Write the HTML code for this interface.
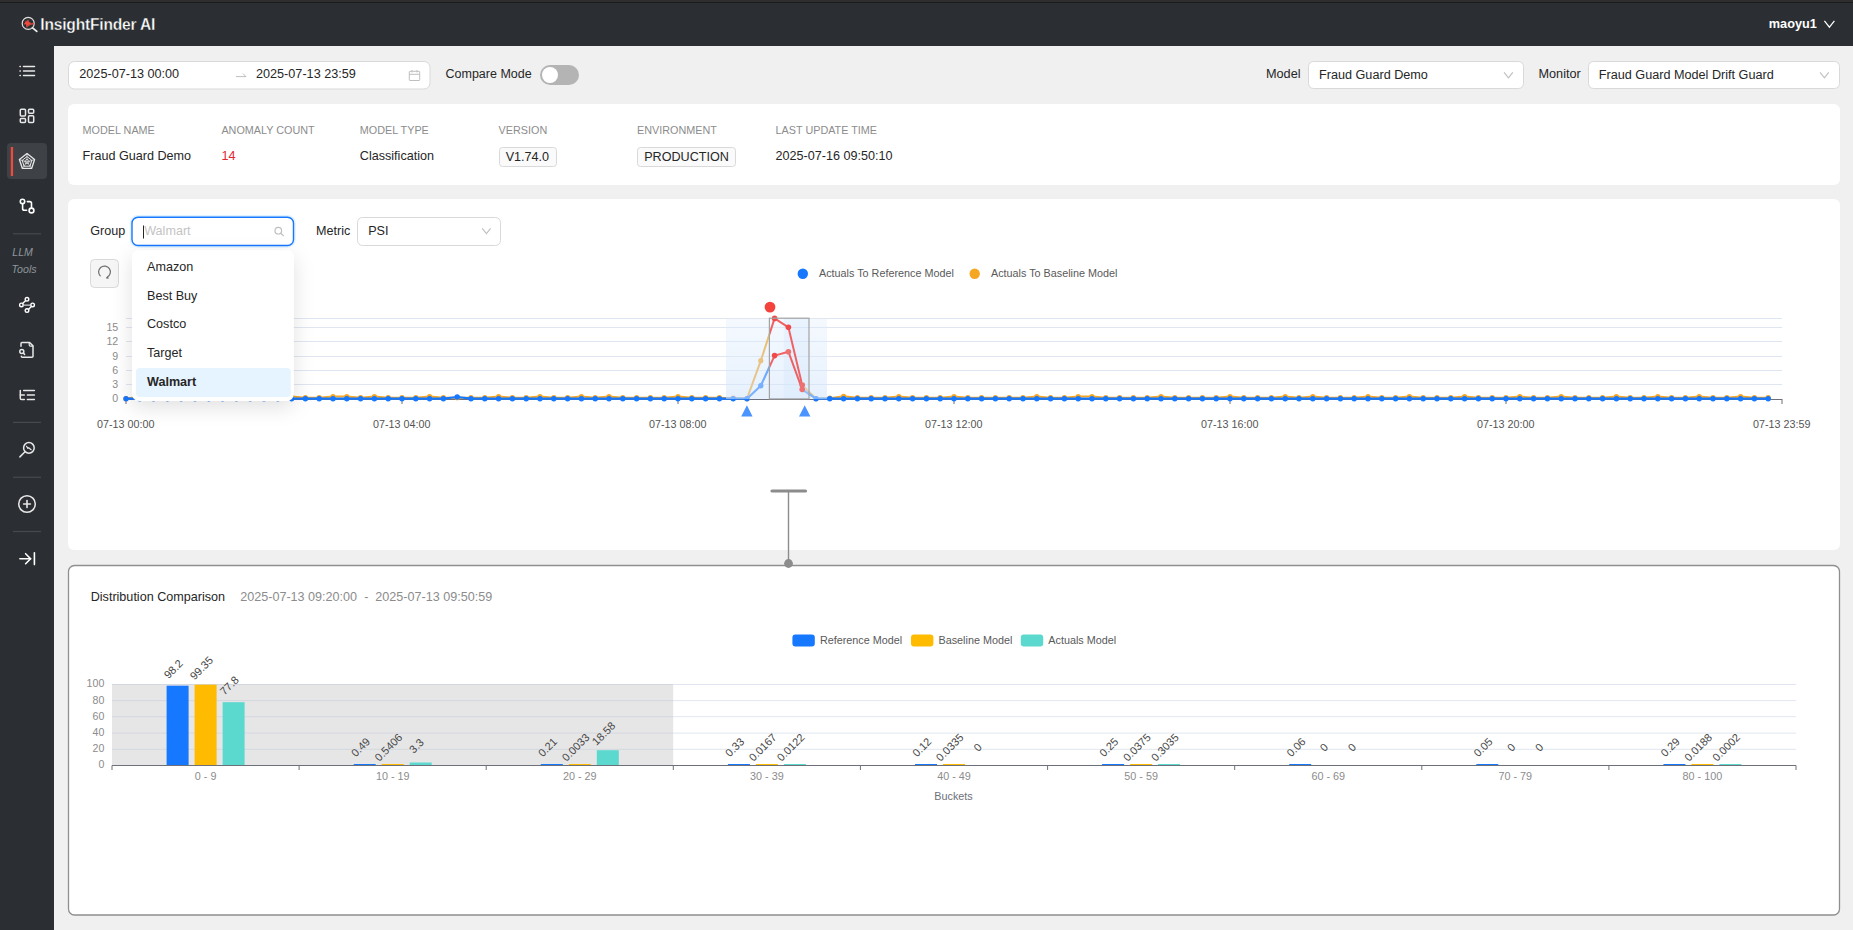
<!DOCTYPE html>
<html><head><meta charset="utf-8"><style>
html,body{margin:0;padding:0;}
body{width:1853px;height:930px;overflow:hidden;background:#f0f0f0;font-family:"Liberation Sans", sans-serif;position:relative;}
svg{position:absolute;left:0;top:0;font-family:"Liberation Sans", sans-serif;}
</style></head><body>
<svg width="1853" height="930" viewBox="0 0 1853 930">
<rect x="0" y="0" width="1853" height="930" fill="#f0f0f0"/>
<!-- header -->
<rect x="0" y="0" width="1853" height="46" fill="#2b2f33"/>
<rect x="0" y="0" width="1853" height="2" fill="#2e2e2e"/>
<rect x="0" y="2" width="1853" height="1" fill="#1b1b1b"/>

<g>
  <circle cx="28.2" cy="23.4" r="6.0" fill="none" stroke="#e0e0e0" stroke-width="1.2"/>
  <line x1="32.6" y1="27.9" x2="36.8" y2="31.4" stroke="#f0f0f0" stroke-width="1.7" stroke-linecap="round"/>
  <path d="M24.1 23.8 H25.3 L26.2 21.2 L27 26.9 L28 20 L28.8 25.6 L29.6 22.6 L30.4 24.2 L34.2 23.6" fill="none" stroke="#ef4b3c" stroke-width="1.2" stroke-linejoin="round"/>
</g>

<text x="40.3" y="29.5" font-size="15.6" font-weight="700" fill="#ffffff" letter-spacing="-0.2" stroke="#2b2f33" stroke-width="0.35">InsightFinder AI</text>
<text x="1768.8" y="28.2" font-size="12.7" font-weight="700" fill="#ffffff">maoyu1</text>
<path d="M1824.4 20.8 L1829.4 27.2 L1834.4 20.8" fill="none" stroke="#ffffff" stroke-width="1.2"/>
<!-- sidebar -->
<rect x="0" y="46" width="54" height="884" fill="#2b2f33"/>

<g fill="none" stroke="#e8e8e8" stroke-width="1.5" stroke-linecap="round" stroke-linejoin="round">
  <!-- list -->
  <line x1="23.5" y1="66.4" x2="34.5" y2="66.4"/><line x1="23.5" y1="70.9" x2="34.5" y2="70.9"/><line x1="23.5" y1="75.5" x2="34.5" y2="75.5"/>
  <line x1="20" y1="66.4" x2="20.3" y2="66.4"/><line x1="20" y1="70.9" x2="20.3" y2="70.9"/><line x1="20" y1="75.5" x2="20.3" y2="75.5"/>
  <!-- grid -->
  <rect x="20.3" y="109.2" width="5.2" height="6.9" rx="1"/>
  <rect x="28.5" y="109.2" width="5.2" height="4" rx="1"/>
  <rect x="20.3" y="118.6" width="5.2" height="4" rx="1"/>
  <rect x="28.5" y="115.7" width="5.2" height="6.9" rx="1"/>
</g>
<rect x="7" y="143" width="40" height="36" rx="4" fill="#3e4246"/>
<rect x="10.8" y="147" width="2.3" height="29" fill="#ef4b3c"/>
<g fill="none" stroke="#e8e8e8" stroke-width="1.3" stroke-linejoin="round">
  <polygon points="27,153.6 34.6,159.5 31.7,168.3 22.3,168.3 19.4,159.5"/>
  <polygon points="27,156.6 31.8,160.3 30,166.2 24,166.2 22.2,160.3" stroke-width="1"/>
  <polygon points="27,159.2 29.3,160.9 28.4,163.6 25.6,163.6 24.7,160.9" stroke-width="0.8"/>
  <line x1="27" y1="153.3" x2="27" y2="162" stroke-width="0.7"/>
  <line x1="34.6" y1="159.5" x2="27" y2="162" stroke-width="0.7"/>
  <line x1="19.4" y1="159.5" x2="27" y2="162" stroke-width="0.7"/>
  <line x1="31.7" y1="168.3" x2="27" y2="162" stroke-width="0.7"/>
  <line x1="22.3" y1="168.3" x2="27" y2="162" stroke-width="0.7"/>
</g>
<g fill="none" stroke="#ffffff" stroke-width="1.6" stroke-linecap="round" stroke-linejoin="round">
  <!-- route -->
  <circle cx="22.5" cy="201.5" r="2.2"/>
  <circle cx="31.5" cy="210.5" r="2.4"/>
  <path d="M22.6 203.6 V208.5 Q22.6 210.3 24.4 210.3 H26.6"/>
  <path d="M27.4 201.6 H29.8 Q31.5 201.6 31.5 203.3 V208.2"/>
</g>
<line x1="13" y1="233.8" x2="41" y2="233.8" stroke="#464a4e" stroke-width="1.2"/>
<text x="12.3" y="256.2" font-size="10.6" font-style="italic" fill="#8f959b">LLM</text>
<text x="11.6" y="272.6" font-size="10.6" font-style="italic" fill="#8f959b">Tools</text>
<g fill="none" stroke="#ffffff" stroke-width="1.4" stroke-linecap="round">
  <!-- share nodes -->
  <circle cx="27" cy="299.3" r="1.8"/>
  <circle cx="21.4" cy="304.9" r="1.8"/>
  <circle cx="32.6" cy="304.9" r="1.8"/>
  <circle cx="27" cy="310.6" r="1.8"/>
  <line x1="25.5" y1="300.8" x2="22.6" y2="303.6"/>
  <line x1="23.2" y1="305.1" x2="30.8" y2="305.1" stroke="#cfd2d4"/>
  <line x1="31.4" y1="306.6" x2="28.4" y2="309.4"/>
</g>
<g fill="none" stroke="#e8e8e8" stroke-width="1.5" stroke-linecap="round" stroke-linejoin="round">
  <!-- doc search -->
  <path d="M21 346.2 V343.6 Q21 342.5 22 342.5 H29.6 L33 345.9 V356.3 Q33 357.3 32 357.3 H22.3 Q21.3 357.3 21.3 356.3"/>
  <path d="M29.2 342.8 V344.9 Q29.2 346.1 30.4 346.1 H32.8" stroke-width="1.2"/>
  <circle cx="21.8" cy="351.4" r="2.0"/>
  <line x1="23.4" y1="353" x2="24.6" y2="354.5"/>
  <!-- tree list -->
  <path d="M20.3 390.5 V398.2 Q20.3 399.5 21.6 399.5 H24.3"/>
  <line x1="20.3" y1="395" x2="24.3" y2="395"/>
  <line x1="23.6" y1="390.5" x2="34.4" y2="390.5"/>
  <line x1="27.4" y1="395" x2="34.4" y2="395"/>
  <line x1="27.4" y1="399.5" x2="34.4" y2="399.5"/>
</g>
<line x1="13" y1="422.4" x2="41" y2="422.4" stroke="#464a4e" stroke-width="1.2"/>
<g fill="none" stroke="#e8e8e8" stroke-width="1.5" stroke-linecap="round" stroke-linejoin="round">
  <circle cx="28.9" cy="447.9" r="5.3"/>
  <line x1="25" y1="451.8" x2="19.9" y2="456.9"/>
  <path d="M26.6 446.3 L27.9 448.3 L28.7 447.7 L31.1 449.7" stroke-width="1.2"/>
</g>
<line x1="13" y1="477.3" x2="41" y2="477.3" stroke="#464a4e" stroke-width="1.2"/>
<g fill="none" stroke="#e8e8e8" stroke-width="1.5" stroke-linecap="round">
  <circle cx="27" cy="504" r="8.3"/>
  <line x1="27" y1="500.6" x2="27" y2="507.4" stroke-width="1.6"/>
  <line x1="23.6" y1="504" x2="30.4" y2="504" stroke-width="1.6"/>
</g>
<line x1="13" y1="531.5" x2="41" y2="531.5" stroke="#464a4e" stroke-width="1.2"/>
<g fill="none" stroke="#ffffff" stroke-width="1.6" stroke-linecap="round" stroke-linejoin="round">
  <line x1="34.4" y1="552.8" x2="34.4" y2="564.6"/>
  <line x1="19.9" y1="558.8" x2="30.6" y2="558.8"/>
  <path d="M25.6 553.7 L30.6 558.7 L25.6 563.7"/>
</g>

<!-- date picker -->
<rect x="68.5" y="61.5" width="361.5" height="27.5" rx="6" fill="#fff" stroke="#d9d9d9"/>
<text x="79.3" y="77.8" font-size="12.65" fill="#262626" font-weight="400" text-anchor="start" >2025-07-13 00:00</text>
<path d="M236 76.6 H246 L243 73.6" fill="none" stroke="#bfbfbf" stroke-width="1"/>
<text x="256" y="77.8" font-size="12.65" fill="#262626" font-weight="400" text-anchor="start" >2025-07-13 23:59</text>
<g fill="none" stroke="#bfbfbf" stroke-width="1"><rect x="409.3" y="71.3" width="10.4" height="9.2" rx="0.6"/><line x1="409.3" y1="74.3" x2="419.7" y2="74.3"/><line x1="412" y1="70" x2="412" y2="72.5"/><line x1="417" y1="70" x2="417" y2="72.5"/></g>
<text x="445.5" y="78.2" font-size="12.5" fill="#262626" font-weight="400" text-anchor="start" >Compare Mode</text>
<rect x="540" y="65" width="39" height="20" rx="10" fill="#b4b4b4"/>
<circle cx="550" cy="75" r="8" fill="#fff"/>
<text x="1266" y="78.2" font-size="12.7" fill="#262626" font-weight="400" text-anchor="start" >Model</text>
<rect x="1308.5" y="61.5" width="215" height="27" rx="5" fill="#fff" stroke="#d9d9d9"/>
<text x="1319" y="79" font-size="12.65" fill="#262626" font-weight="400" text-anchor="start" >Fraud Guard Demo</text>
<path d="M1504.1 72.3 L1508.4499999999998 77.868 L1512.8 72.3" fill="none" stroke="#bfbfbf" stroke-width="1.1"/>
<text x="1538.5" y="78.2" font-size="12.7" fill="#262626" font-weight="400" text-anchor="start" >Monitor</text>
<rect x="1588.5" y="61.5" width="251" height="27" rx="5" fill="#fff" stroke="#d9d9d9"/>
<text x="1598.8" y="79" font-size="12.65" fill="#262626" font-weight="400" text-anchor="start" >Fraud Guard Model Drift Guard</text>
<path d="M1820.1 72.3 L1824.3999999999999 77.804 L1828.6999999999998 72.3" fill="none" stroke="#bfbfbf" stroke-width="1.1"/>
<!-- info card -->
<rect x="68" y="104" width="1772" height="81" rx="6" fill="#fff"/>
<text x="82.6" y="134" font-size="10.8" fill="#8c8c8c" font-weight="400" text-anchor="start" >MODEL NAME</text><text x="221.4" y="134" font-size="10.8" fill="#8c8c8c" font-weight="400" text-anchor="start" >ANOMALY COUNT</text><text x="359.8" y="134" font-size="10.8" fill="#8c8c8c" font-weight="400" text-anchor="start" >MODEL TYPE</text><text x="498.6" y="134" font-size="10.8" fill="#8c8c8c" font-weight="400" text-anchor="start" >VERSION</text><text x="637" y="134" font-size="10.8" fill="#8c8c8c" font-weight="400" text-anchor="start" >ENVIRONMENT</text><text x="775.6" y="134" font-size="10.8" fill="#8c8c8c" font-weight="400" text-anchor="start" >LAST UPDATE TIME</text>
<text x="82.6" y="159.8" font-size="12.6" fill="#262626" font-weight="400" text-anchor="start" >Fraud Guard Demo</text>
<text x="221.4" y="159.8" font-size="12.6" fill="#e3262f" font-weight="400" text-anchor="start" >14</text>
<text x="359.8" y="159.8" font-size="12.6" fill="#262626" font-weight="400" text-anchor="start" >Classification</text>
<rect x="499.5" y="147.5" width="57" height="19" rx="3" fill="#fafafa" stroke="#d9d9d9"/>
<text x="505.7" y="161" font-size="12.6" fill="#262626" font-weight="400" text-anchor="start" >V1.74.0</text>
<rect x="637.5" y="147.5" width="98" height="19" rx="3" fill="#fafafa" stroke="#d9d9d9"/>
<text x="644.2" y="161" font-size="12.6" fill="#262626" font-weight="400" text-anchor="start" >PRODUCTION</text>
<text x="775.6" y="159.8" font-size="12.6" fill="#262626" font-weight="400" text-anchor="start" >2025-07-16 09:50:10</text>
<!-- chart card -->
<rect x="68" y="199" width="1772" height="351" rx="6" fill="#fff"/>
<text x="90.3" y="234.8" font-size="12.6" fill="#262626" font-weight="400" text-anchor="start" >Group</text>
<rect x="132" y="217.2" width="161.5" height="28.3" rx="6" fill="#fff" stroke="#0591ff" stroke-opacity="0.12" stroke-width="4.5"/>
<rect x="132" y="217.2" width="161.5" height="28.3" rx="6" fill="#fff" stroke="#1677ff" stroke-width="1.4"/>
<line x1="143.5" y1="225.5" x2="143.5" y2="238.5" stroke="#262626" stroke-width="1"/>
<text x="144.2" y="235.0" font-size="12.6" fill="#c4c4c4" font-weight="400" text-anchor="start" >Walmart</text>
<g fill="none" stroke="#bfbfbf" stroke-width="1.2"><circle cx="278.3" cy="230.7" r="3.3"/><line x1="280.7" y1="233.1" x2="283.6" y2="236"/></g>
<text x="316" y="234.8" font-size="12.6" fill="#262626" font-weight="400" text-anchor="start" >Metric</text>
<rect x="357.5" y="217.5" width="143" height="28" rx="5" fill="#fff" stroke="#d9d9d9"/>
<text x="368.2" y="235" font-size="12.6" fill="#262626" font-weight="400" text-anchor="start" >PSI</text>
<path d="M482.2 228.3 L486.4 233.67600000000002 L490.59999999999997 228.3" fill="none" stroke="#bfbfbf" stroke-width="1.1"/>
<rect x="90.5" y="259.5" width="28" height="28" rx="4" fill="#f5f5f5" stroke="#d9d9d9"/>
<path d="M100.5 276.3 A5.9 5.9 0 1 1 107.2 277.2" fill="none" stroke="#6e6e6e" stroke-width="1.2"/>
<path d="M106 278 L107.6 276.6 L108.4 278.4 Z" fill="#6e6e6e" stroke="#6e6e6e" stroke-width="0.6"/>

<defs>
  <clipPath id="cRed"><rect x="769.4" y="280" width="32.80000000000007" height="130"/></clipPath>
  <clipPath id="cNotRed"><path d="M0 280 H769.4 V410 H0 Z M802.2 280 H1853 V410 H802.2 Z"/></clipPath>
  <linearGradient id="band" x1="0" y1="0" x2="0" y2="1"><stop offset="0" stop-color="#dcebfd" stop-opacity="0.3"/><stop offset="1" stop-color="#d2e5fb" stop-opacity="0.55"/></linearGradient>
</defs>
<line x1="126" y1="318.5" x2="1782" y2="318.5" stroke="#e0e6f1" stroke-width="1"/><line x1="126" y1="327.5" x2="1782" y2="327.5" stroke="#e0e6f1" stroke-width="1"/><line x1="126" y1="341.5" x2="1782" y2="341.5" stroke="#e0e6f1" stroke-width="1"/><line x1="126" y1="356.5" x2="1782" y2="356.5" stroke="#e0e6f1" stroke-width="1"/><line x1="126" y1="370.5" x2="1782" y2="370.5" stroke="#e0e6f1" stroke-width="1"/><line x1="126" y1="384.5" x2="1782" y2="384.5" stroke="#e0e6f1" stroke-width="1"/>
<line x1="126" y1="399.5" x2="1782" y2="399.5" stroke="#6e7079" stroke-width="1"/>
<line x1="126" y1="399" x2="126" y2="404" stroke="#6e7079" stroke-width="1"/><line x1="402" y1="399" x2="402" y2="404" stroke="#6e7079" stroke-width="1"/><line x1="678" y1="399" x2="678" y2="404" stroke="#6e7079" stroke-width="1"/><line x1="954" y1="399" x2="954" y2="404" stroke="#6e7079" stroke-width="1"/><line x1="1230" y1="399" x2="1230" y2="404" stroke="#6e7079" stroke-width="1"/><line x1="1506" y1="399" x2="1506" y2="404" stroke="#6e7079" stroke-width="1"/><line x1="1782" y1="399" x2="1782" y2="404" stroke="#6e7079" stroke-width="1"/>
<text x="118.2" y="330.5" font-size="10.6" fill="#8c8c8c" font-weight="400" text-anchor="end" >15</text><text x="118.2" y="344.8" font-size="10.6" fill="#8c8c8c" font-weight="400" text-anchor="end" >12</text><text x="118.2" y="359.6" font-size="10.6" fill="#8c8c8c" font-weight="400" text-anchor="end" >9</text><text x="118.2" y="373.90000000000003" font-size="10.6" fill="#8c8c8c" font-weight="400" text-anchor="end" >6</text><text x="118.2" y="388.1" font-size="10.6" fill="#8c8c8c" font-weight="400" text-anchor="end" >3</text><text x="118.2" y="402.3" font-size="10.6" fill="#8c8c8c" font-weight="400" text-anchor="end" >0</text>
<text x="125.7" y="428.0" font-size="10.75" fill="#555555" font-weight="400" text-anchor="middle" >07-13 00:00</text><text x="401.7" y="428.0" font-size="10.75" fill="#555555" font-weight="400" text-anchor="middle" >07-13 04:00</text><text x="677.7" y="428.0" font-size="10.75" fill="#555555" font-weight="400" text-anchor="middle" >07-13 08:00</text><text x="953.7" y="428.0" font-size="10.75" fill="#555555" font-weight="400" text-anchor="middle" >07-13 12:00</text><text x="1229.7" y="428.0" font-size="10.75" fill="#555555" font-weight="400" text-anchor="middle" >07-13 16:00</text><text x="1505.7" y="428.0" font-size="10.75" fill="#555555" font-weight="400" text-anchor="middle" >07-13 20:00</text><text x="1781.7" y="428.0" font-size="10.75" fill="#555555" font-weight="400" text-anchor="middle" >07-13 23:59</text>
<g clip-path="url(#cNotRed)">
  <polyline points="126.0,398.7 139.8,396.6 153.6,397.7 167.4,396.6 181.2,397.7 195.0,396.6 208.8,397.7 222.6,397.7 236.4,396.6 250.2,397.7 264.0,397.7 277.8,397.7 291.6,396.6 305.4,397.7 319.2,397.7 333.0,396.6 346.8,396.6 360.6,397.7 374.4,396.6 388.2,397.7 402.0,397.7 415.8,397.7 429.6,396.6 443.4,397.7 457.2,397.7 471.0,397.7 484.8,397.7 498.6,396.6 512.4,397.7 526.2,397.7 540.0,396.6 553.8,397.7 567.6,397.7 581.4,396.6 595.2,397.7 609.0,396.6 622.8,397.7 636.6,397.7 650.4,397.7 664.2,397.7 678.0,396.6 691.8,397.7 705.6,397.7 719.4,397.7 733.2,398.2 747.0,398.7 760.8,360.7 774.6,318.4 788.4,327.3 802.2,385.1 816.0,398.7 829.8,398.2 843.6,396.3 857.4,397.7 871.2,397.7 885.0,397.7 898.8,396.6 912.6,397.7 926.4,397.7 940.2,397.7 954.0,396.6 967.8,397.7 981.6,397.7 995.4,397.7 1009.2,397.7 1023.0,397.7 1036.8,396.6 1050.6,397.7 1064.4,397.7 1078.2,396.6 1092.0,396.6 1105.8,397.7 1119.6,397.7 1133.4,397.7 1147.2,397.7 1161.0,396.6 1174.8,397.7 1188.6,397.7 1202.4,397.7 1216.2,397.7 1230.0,396.6 1243.8,397.7 1257.6,397.7 1271.4,397.7 1285.2,396.6 1299.0,397.7 1312.8,396.6 1326.6,397.7 1340.4,397.7 1354.2,397.7 1368.0,396.6 1381.8,397.7 1395.6,397.7 1409.4,396.6 1423.2,397.7 1437.0,397.7 1450.8,397.7 1464.6,396.6 1478.4,397.7 1492.2,397.7 1506.0,397.7 1519.8,396.6 1533.6,397.7 1547.4,397.7 1561.2,396.6 1575.0,397.7 1588.8,397.7 1602.6,397.7 1616.4,396.6 1630.2,397.7 1644.0,397.7 1657.8,396.6 1671.6,397.7 1685.4,397.7 1699.2,396.6 1713.0,397.7 1726.8,397.7 1740.6,396.6 1754.4,397.7 1768.2,397.7" fill="none" stroke="#f5a623" stroke-width="2" stroke-linejoin="round"/>
  <circle cx="126.0" cy="398.7" r="2.6" fill="#f5a623"/><circle cx="139.8" cy="396.6" r="2.6" fill="#f5a623"/><circle cx="153.6" cy="397.7" r="2.6" fill="#f5a623"/><circle cx="167.4" cy="396.6" r="2.6" fill="#f5a623"/><circle cx="181.2" cy="397.7" r="2.6" fill="#f5a623"/><circle cx="195.0" cy="396.6" r="2.6" fill="#f5a623"/><circle cx="208.8" cy="397.7" r="2.6" fill="#f5a623"/><circle cx="222.6" cy="397.7" r="2.6" fill="#f5a623"/><circle cx="236.4" cy="396.6" r="2.6" fill="#f5a623"/><circle cx="250.2" cy="397.7" r="2.6" fill="#f5a623"/><circle cx="264.0" cy="397.7" r="2.6" fill="#f5a623"/><circle cx="277.8" cy="397.7" r="2.6" fill="#f5a623"/><circle cx="291.6" cy="396.6" r="2.6" fill="#f5a623"/><circle cx="305.4" cy="397.7" r="2.6" fill="#f5a623"/><circle cx="319.2" cy="397.7" r="2.6" fill="#f5a623"/><circle cx="333.0" cy="396.6" r="2.6" fill="#f5a623"/><circle cx="346.8" cy="396.6" r="2.6" fill="#f5a623"/><circle cx="360.6" cy="397.7" r="2.6" fill="#f5a623"/><circle cx="374.4" cy="396.6" r="2.6" fill="#f5a623"/><circle cx="388.2" cy="397.7" r="2.6" fill="#f5a623"/><circle cx="402.0" cy="397.7" r="2.6" fill="#f5a623"/><circle cx="415.8" cy="397.7" r="2.6" fill="#f5a623"/><circle cx="429.6" cy="396.6" r="2.6" fill="#f5a623"/><circle cx="443.4" cy="397.7" r="2.6" fill="#f5a623"/><circle cx="457.2" cy="397.7" r="2.6" fill="#f5a623"/><circle cx="471.0" cy="397.7" r="2.6" fill="#f5a623"/><circle cx="484.8" cy="397.7" r="2.6" fill="#f5a623"/><circle cx="498.6" cy="396.6" r="2.6" fill="#f5a623"/><circle cx="512.4" cy="397.7" r="2.6" fill="#f5a623"/><circle cx="526.2" cy="397.7" r="2.6" fill="#f5a623"/><circle cx="540.0" cy="396.6" r="2.6" fill="#f5a623"/><circle cx="553.8" cy="397.7" r="2.6" fill="#f5a623"/><circle cx="567.6" cy="397.7" r="2.6" fill="#f5a623"/><circle cx="581.4" cy="396.6" r="2.6" fill="#f5a623"/><circle cx="595.2" cy="397.7" r="2.6" fill="#f5a623"/><circle cx="609.0" cy="396.6" r="2.6" fill="#f5a623"/><circle cx="622.8" cy="397.7" r="2.6" fill="#f5a623"/><circle cx="636.6" cy="397.7" r="2.6" fill="#f5a623"/><circle cx="650.4" cy="397.7" r="2.6" fill="#f5a623"/><circle cx="664.2" cy="397.7" r="2.6" fill="#f5a623"/><circle cx="678.0" cy="396.6" r="2.6" fill="#f5a623"/><circle cx="691.8" cy="397.7" r="2.6" fill="#f5a623"/><circle cx="705.6" cy="397.7" r="2.6" fill="#f5a623"/><circle cx="719.4" cy="397.7" r="2.6" fill="#f5a623"/><circle cx="733.2" cy="398.2" r="2.6" fill="#f5a623"/><circle cx="747.0" cy="398.7" r="2.6" fill="#f5a623"/><circle cx="760.8" cy="360.7" r="2.6" fill="#f5a623"/><circle cx="774.6" cy="318.4" r="2.6" fill="#f5a623"/><circle cx="788.4" cy="327.3" r="2.6" fill="#f5a623"/><circle cx="802.2" cy="385.1" r="2.6" fill="#f5a623"/><circle cx="816.0" cy="398.7" r="2.6" fill="#f5a623"/><circle cx="829.8" cy="398.2" r="2.6" fill="#f5a623"/><circle cx="843.6" cy="396.3" r="2.6" fill="#f5a623"/><circle cx="857.4" cy="397.7" r="2.6" fill="#f5a623"/><circle cx="871.2" cy="397.7" r="2.6" fill="#f5a623"/><circle cx="885.0" cy="397.7" r="2.6" fill="#f5a623"/><circle cx="898.8" cy="396.6" r="2.6" fill="#f5a623"/><circle cx="912.6" cy="397.7" r="2.6" fill="#f5a623"/><circle cx="926.4" cy="397.7" r="2.6" fill="#f5a623"/><circle cx="940.2" cy="397.7" r="2.6" fill="#f5a623"/><circle cx="954.0" cy="396.6" r="2.6" fill="#f5a623"/><circle cx="967.8" cy="397.7" r="2.6" fill="#f5a623"/><circle cx="981.6" cy="397.7" r="2.6" fill="#f5a623"/><circle cx="995.4" cy="397.7" r="2.6" fill="#f5a623"/><circle cx="1009.2" cy="397.7" r="2.6" fill="#f5a623"/><circle cx="1023.0" cy="397.7" r="2.6" fill="#f5a623"/><circle cx="1036.8" cy="396.6" r="2.6" fill="#f5a623"/><circle cx="1050.6" cy="397.7" r="2.6" fill="#f5a623"/><circle cx="1064.4" cy="397.7" r="2.6" fill="#f5a623"/><circle cx="1078.2" cy="396.6" r="2.6" fill="#f5a623"/><circle cx="1092.0" cy="396.6" r="2.6" fill="#f5a623"/><circle cx="1105.8" cy="397.7" r="2.6" fill="#f5a623"/><circle cx="1119.6" cy="397.7" r="2.6" fill="#f5a623"/><circle cx="1133.4" cy="397.7" r="2.6" fill="#f5a623"/><circle cx="1147.2" cy="397.7" r="2.6" fill="#f5a623"/><circle cx="1161.0" cy="396.6" r="2.6" fill="#f5a623"/><circle cx="1174.8" cy="397.7" r="2.6" fill="#f5a623"/><circle cx="1188.6" cy="397.7" r="2.6" fill="#f5a623"/><circle cx="1202.4" cy="397.7" r="2.6" fill="#f5a623"/><circle cx="1216.2" cy="397.7" r="2.6" fill="#f5a623"/><circle cx="1230.0" cy="396.6" r="2.6" fill="#f5a623"/><circle cx="1243.8" cy="397.7" r="2.6" fill="#f5a623"/><circle cx="1257.6" cy="397.7" r="2.6" fill="#f5a623"/><circle cx="1271.4" cy="397.7" r="2.6" fill="#f5a623"/><circle cx="1285.2" cy="396.6" r="2.6" fill="#f5a623"/><circle cx="1299.0" cy="397.7" r="2.6" fill="#f5a623"/><circle cx="1312.8" cy="396.6" r="2.6" fill="#f5a623"/><circle cx="1326.6" cy="397.7" r="2.6" fill="#f5a623"/><circle cx="1340.4" cy="397.7" r="2.6" fill="#f5a623"/><circle cx="1354.2" cy="397.7" r="2.6" fill="#f5a623"/><circle cx="1368.0" cy="396.6" r="2.6" fill="#f5a623"/><circle cx="1381.8" cy="397.7" r="2.6" fill="#f5a623"/><circle cx="1395.6" cy="397.7" r="2.6" fill="#f5a623"/><circle cx="1409.4" cy="396.6" r="2.6" fill="#f5a623"/><circle cx="1423.2" cy="397.7" r="2.6" fill="#f5a623"/><circle cx="1437.0" cy="397.7" r="2.6" fill="#f5a623"/><circle cx="1450.8" cy="397.7" r="2.6" fill="#f5a623"/><circle cx="1464.6" cy="396.6" r="2.6" fill="#f5a623"/><circle cx="1478.4" cy="397.7" r="2.6" fill="#f5a623"/><circle cx="1492.2" cy="397.7" r="2.6" fill="#f5a623"/><circle cx="1506.0" cy="397.7" r="2.6" fill="#f5a623"/><circle cx="1519.8" cy="396.6" r="2.6" fill="#f5a623"/><circle cx="1533.6" cy="397.7" r="2.6" fill="#f5a623"/><circle cx="1547.4" cy="397.7" r="2.6" fill="#f5a623"/><circle cx="1561.2" cy="396.6" r="2.6" fill="#f5a623"/><circle cx="1575.0" cy="397.7" r="2.6" fill="#f5a623"/><circle cx="1588.8" cy="397.7" r="2.6" fill="#f5a623"/><circle cx="1602.6" cy="397.7" r="2.6" fill="#f5a623"/><circle cx="1616.4" cy="396.6" r="2.6" fill="#f5a623"/><circle cx="1630.2" cy="397.7" r="2.6" fill="#f5a623"/><circle cx="1644.0" cy="397.7" r="2.6" fill="#f5a623"/><circle cx="1657.8" cy="396.6" r="2.6" fill="#f5a623"/><circle cx="1671.6" cy="397.7" r="2.6" fill="#f5a623"/><circle cx="1685.4" cy="397.7" r="2.6" fill="#f5a623"/><circle cx="1699.2" cy="396.6" r="2.6" fill="#f5a623"/><circle cx="1713.0" cy="397.7" r="2.6" fill="#f5a623"/><circle cx="1726.8" cy="397.7" r="2.6" fill="#f5a623"/><circle cx="1740.6" cy="396.6" r="2.6" fill="#f5a623"/><circle cx="1754.4" cy="397.7" r="2.6" fill="#f5a623"/><circle cx="1768.2" cy="397.7" r="2.6" fill="#f5a623"/>
  <polyline points="126.0,398.7 139.8,398.7 153.6,398.7 167.4,398.7 181.2,398.7 195.0,398.7 208.8,398.7 222.6,398.7 236.4,398.7 250.2,398.7 264.0,398.7 277.8,398.7 291.6,398.7 305.4,398.7 319.2,398.7 333.0,398.7 346.8,398.7 360.6,398.7 374.4,398.7 388.2,398.7 402.0,398.7 415.8,398.7 429.6,398.7 443.4,398.7 457.2,397.0 471.0,398.7 484.8,398.7 498.6,398.7 512.4,398.7 526.2,398.7 540.0,398.7 553.8,398.7 567.6,398.7 581.4,398.7 595.2,398.7 609.0,398.7 622.8,398.7 636.6,398.7 650.4,398.7 664.2,398.7 678.0,398.7 691.8,398.7 705.6,398.7 719.4,398.7 733.2,398.7 747.0,398.7 760.8,385.8 774.6,355.6 788.4,351.7 802.2,389.5 816.0,398.7 829.8,398.7 843.6,398.7 857.4,398.7 871.2,398.7 885.0,398.7 898.8,398.7 912.6,398.7 926.4,398.7 940.2,398.7 954.0,398.7 967.8,398.7 981.6,398.7 995.4,398.7 1009.2,398.7 1023.0,398.7 1036.8,398.7 1050.6,398.7 1064.4,398.7 1078.2,398.7 1092.0,398.7 1105.8,398.7 1119.6,398.7 1133.4,398.7 1147.2,398.7 1161.0,398.7 1174.8,398.7 1188.6,398.7 1202.4,398.7 1216.2,398.7 1230.0,398.7 1243.8,398.7 1257.6,398.7 1271.4,398.7 1285.2,398.7 1299.0,398.7 1312.8,398.7 1326.6,398.7 1340.4,398.7 1354.2,398.7 1368.0,398.7 1381.8,398.7 1395.6,398.7 1409.4,398.7 1423.2,398.7 1437.0,398.7 1450.8,398.7 1464.6,398.7 1478.4,398.7 1492.2,398.7 1506.0,398.7 1519.8,398.7 1533.6,398.7 1547.4,398.7 1561.2,398.7 1575.0,398.7 1588.8,398.7 1602.6,398.7 1616.4,398.7 1630.2,398.7 1644.0,398.7 1657.8,398.7 1671.6,398.7 1685.4,398.7 1699.2,398.7 1713.0,398.7 1726.8,398.7 1740.6,398.7 1754.4,398.7 1768.2,398.7" fill="none" stroke="#1677ff" stroke-width="2.2" stroke-linejoin="round"/>
  <circle cx="126.0" cy="398.7" r="2.7" fill="#1677ff"/><circle cx="139.8" cy="398.7" r="2.7" fill="#1677ff"/><circle cx="153.6" cy="398.7" r="2.7" fill="#1677ff"/><circle cx="167.4" cy="398.7" r="2.7" fill="#1677ff"/><circle cx="181.2" cy="398.7" r="2.7" fill="#1677ff"/><circle cx="195.0" cy="398.7" r="2.7" fill="#1677ff"/><circle cx="208.8" cy="398.7" r="2.7" fill="#1677ff"/><circle cx="222.6" cy="398.7" r="2.7" fill="#1677ff"/><circle cx="236.4" cy="398.7" r="2.7" fill="#1677ff"/><circle cx="250.2" cy="398.7" r="2.7" fill="#1677ff"/><circle cx="264.0" cy="398.7" r="2.7" fill="#1677ff"/><circle cx="277.8" cy="398.7" r="2.7" fill="#1677ff"/><circle cx="291.6" cy="398.7" r="2.7" fill="#1677ff"/><circle cx="305.4" cy="398.7" r="2.7" fill="#1677ff"/><circle cx="319.2" cy="398.7" r="2.7" fill="#1677ff"/><circle cx="333.0" cy="398.7" r="2.7" fill="#1677ff"/><circle cx="346.8" cy="398.7" r="2.7" fill="#1677ff"/><circle cx="360.6" cy="398.7" r="2.7" fill="#1677ff"/><circle cx="374.4" cy="398.7" r="2.7" fill="#1677ff"/><circle cx="388.2" cy="398.7" r="2.7" fill="#1677ff"/><circle cx="402.0" cy="398.7" r="2.7" fill="#1677ff"/><circle cx="415.8" cy="398.7" r="2.7" fill="#1677ff"/><circle cx="429.6" cy="398.7" r="2.7" fill="#1677ff"/><circle cx="443.4" cy="398.7" r="2.7" fill="#1677ff"/><circle cx="457.2" cy="397.0" r="2.7" fill="#1677ff"/><circle cx="471.0" cy="398.7" r="2.7" fill="#1677ff"/><circle cx="484.8" cy="398.7" r="2.7" fill="#1677ff"/><circle cx="498.6" cy="398.7" r="2.7" fill="#1677ff"/><circle cx="512.4" cy="398.7" r="2.7" fill="#1677ff"/><circle cx="526.2" cy="398.7" r="2.7" fill="#1677ff"/><circle cx="540.0" cy="398.7" r="2.7" fill="#1677ff"/><circle cx="553.8" cy="398.7" r="2.7" fill="#1677ff"/><circle cx="567.6" cy="398.7" r="2.7" fill="#1677ff"/><circle cx="581.4" cy="398.7" r="2.7" fill="#1677ff"/><circle cx="595.2" cy="398.7" r="2.7" fill="#1677ff"/><circle cx="609.0" cy="398.7" r="2.7" fill="#1677ff"/><circle cx="622.8" cy="398.7" r="2.7" fill="#1677ff"/><circle cx="636.6" cy="398.7" r="2.7" fill="#1677ff"/><circle cx="650.4" cy="398.7" r="2.7" fill="#1677ff"/><circle cx="664.2" cy="398.7" r="2.7" fill="#1677ff"/><circle cx="678.0" cy="398.7" r="2.7" fill="#1677ff"/><circle cx="691.8" cy="398.7" r="2.7" fill="#1677ff"/><circle cx="705.6" cy="398.7" r="2.7" fill="#1677ff"/><circle cx="719.4" cy="398.7" r="2.7" fill="#1677ff"/><circle cx="733.2" cy="398.7" r="2.7" fill="#1677ff"/><circle cx="747.0" cy="398.7" r="2.7" fill="#1677ff"/><circle cx="760.8" cy="385.8" r="2.7" fill="#1677ff"/><circle cx="774.6" cy="355.6" r="2.7" fill="#1677ff"/><circle cx="788.4" cy="351.7" r="2.7" fill="#1677ff"/><circle cx="802.2" cy="389.5" r="2.7" fill="#1677ff"/><circle cx="816.0" cy="398.7" r="2.7" fill="#1677ff"/><circle cx="829.8" cy="398.7" r="2.7" fill="#1677ff"/><circle cx="843.6" cy="398.7" r="2.7" fill="#1677ff"/><circle cx="857.4" cy="398.7" r="2.7" fill="#1677ff"/><circle cx="871.2" cy="398.7" r="2.7" fill="#1677ff"/><circle cx="885.0" cy="398.7" r="2.7" fill="#1677ff"/><circle cx="898.8" cy="398.7" r="2.7" fill="#1677ff"/><circle cx="912.6" cy="398.7" r="2.7" fill="#1677ff"/><circle cx="926.4" cy="398.7" r="2.7" fill="#1677ff"/><circle cx="940.2" cy="398.7" r="2.7" fill="#1677ff"/><circle cx="954.0" cy="398.7" r="2.7" fill="#1677ff"/><circle cx="967.8" cy="398.7" r="2.7" fill="#1677ff"/><circle cx="981.6" cy="398.7" r="2.7" fill="#1677ff"/><circle cx="995.4" cy="398.7" r="2.7" fill="#1677ff"/><circle cx="1009.2" cy="398.7" r="2.7" fill="#1677ff"/><circle cx="1023.0" cy="398.7" r="2.7" fill="#1677ff"/><circle cx="1036.8" cy="398.7" r="2.7" fill="#1677ff"/><circle cx="1050.6" cy="398.7" r="2.7" fill="#1677ff"/><circle cx="1064.4" cy="398.7" r="2.7" fill="#1677ff"/><circle cx="1078.2" cy="398.7" r="2.7" fill="#1677ff"/><circle cx="1092.0" cy="398.7" r="2.7" fill="#1677ff"/><circle cx="1105.8" cy="398.7" r="2.7" fill="#1677ff"/><circle cx="1119.6" cy="398.7" r="2.7" fill="#1677ff"/><circle cx="1133.4" cy="398.7" r="2.7" fill="#1677ff"/><circle cx="1147.2" cy="398.7" r="2.7" fill="#1677ff"/><circle cx="1161.0" cy="398.7" r="2.7" fill="#1677ff"/><circle cx="1174.8" cy="398.7" r="2.7" fill="#1677ff"/><circle cx="1188.6" cy="398.7" r="2.7" fill="#1677ff"/><circle cx="1202.4" cy="398.7" r="2.7" fill="#1677ff"/><circle cx="1216.2" cy="398.7" r="2.7" fill="#1677ff"/><circle cx="1230.0" cy="398.7" r="2.7" fill="#1677ff"/><circle cx="1243.8" cy="398.7" r="2.7" fill="#1677ff"/><circle cx="1257.6" cy="398.7" r="2.7" fill="#1677ff"/><circle cx="1271.4" cy="398.7" r="2.7" fill="#1677ff"/><circle cx="1285.2" cy="398.7" r="2.7" fill="#1677ff"/><circle cx="1299.0" cy="398.7" r="2.7" fill="#1677ff"/><circle cx="1312.8" cy="398.7" r="2.7" fill="#1677ff"/><circle cx="1326.6" cy="398.7" r="2.7" fill="#1677ff"/><circle cx="1340.4" cy="398.7" r="2.7" fill="#1677ff"/><circle cx="1354.2" cy="398.7" r="2.7" fill="#1677ff"/><circle cx="1368.0" cy="398.7" r="2.7" fill="#1677ff"/><circle cx="1381.8" cy="398.7" r="2.7" fill="#1677ff"/><circle cx="1395.6" cy="398.7" r="2.7" fill="#1677ff"/><circle cx="1409.4" cy="398.7" r="2.7" fill="#1677ff"/><circle cx="1423.2" cy="398.7" r="2.7" fill="#1677ff"/><circle cx="1437.0" cy="398.7" r="2.7" fill="#1677ff"/><circle cx="1450.8" cy="398.7" r="2.7" fill="#1677ff"/><circle cx="1464.6" cy="398.7" r="2.7" fill="#1677ff"/><circle cx="1478.4" cy="398.7" r="2.7" fill="#1677ff"/><circle cx="1492.2" cy="398.7" r="2.7" fill="#1677ff"/><circle cx="1506.0" cy="398.7" r="2.7" fill="#1677ff"/><circle cx="1519.8" cy="398.7" r="2.7" fill="#1677ff"/><circle cx="1533.6" cy="398.7" r="2.7" fill="#1677ff"/><circle cx="1547.4" cy="398.7" r="2.7" fill="#1677ff"/><circle cx="1561.2" cy="398.7" r="2.7" fill="#1677ff"/><circle cx="1575.0" cy="398.7" r="2.7" fill="#1677ff"/><circle cx="1588.8" cy="398.7" r="2.7" fill="#1677ff"/><circle cx="1602.6" cy="398.7" r="2.7" fill="#1677ff"/><circle cx="1616.4" cy="398.7" r="2.7" fill="#1677ff"/><circle cx="1630.2" cy="398.7" r="2.7" fill="#1677ff"/><circle cx="1644.0" cy="398.7" r="2.7" fill="#1677ff"/><circle cx="1657.8" cy="398.7" r="2.7" fill="#1677ff"/><circle cx="1671.6" cy="398.7" r="2.7" fill="#1677ff"/><circle cx="1685.4" cy="398.7" r="2.7" fill="#1677ff"/><circle cx="1699.2" cy="398.7" r="2.7" fill="#1677ff"/><circle cx="1713.0" cy="398.7" r="2.7" fill="#1677ff"/><circle cx="1726.8" cy="398.7" r="2.7" fill="#1677ff"/><circle cx="1740.6" cy="398.7" r="2.7" fill="#1677ff"/><circle cx="1754.4" cy="398.7" r="2.7" fill="#1677ff"/><circle cx="1768.2" cy="398.7" r="2.7" fill="#1677ff"/>
</g>

<rect x="726" y="318.5" width="101" height="80.5" fill="url(#band)"/>
<rect x="783.8" y="318.5" width="25.2" height="80.5" fill="#cfe3fb" fill-opacity="0.3"/>
<g clip-path="url(#cRed)">
  <polyline points="126.0,398.7 139.8,396.6 153.6,397.7 167.4,396.6 181.2,397.7 195.0,396.6 208.8,397.7 222.6,397.7 236.4,396.6 250.2,397.7 264.0,397.7 277.8,397.7 291.6,396.6 305.4,397.7 319.2,397.7 333.0,396.6 346.8,396.6 360.6,397.7 374.4,396.6 388.2,397.7 402.0,397.7 415.8,397.7 429.6,396.6 443.4,397.7 457.2,397.7 471.0,397.7 484.8,397.7 498.6,396.6 512.4,397.7 526.2,397.7 540.0,396.6 553.8,397.7 567.6,397.7 581.4,396.6 595.2,397.7 609.0,396.6 622.8,397.7 636.6,397.7 650.4,397.7 664.2,397.7 678.0,396.6 691.8,397.7 705.6,397.7 719.4,397.7 733.2,398.2 747.0,398.7 760.8,360.7 774.6,318.4 788.4,327.3 802.2,385.1 816.0,398.7 829.8,398.2 843.6,396.3 857.4,397.7 871.2,397.7 885.0,397.7 898.8,396.6 912.6,397.7 926.4,397.7 940.2,397.7 954.0,396.6 967.8,397.7 981.6,397.7 995.4,397.7 1009.2,397.7 1023.0,397.7 1036.8,396.6 1050.6,397.7 1064.4,397.7 1078.2,396.6 1092.0,396.6 1105.8,397.7 1119.6,397.7 1133.4,397.7 1147.2,397.7 1161.0,396.6 1174.8,397.7 1188.6,397.7 1202.4,397.7 1216.2,397.7 1230.0,396.6 1243.8,397.7 1257.6,397.7 1271.4,397.7 1285.2,396.6 1299.0,397.7 1312.8,396.6 1326.6,397.7 1340.4,397.7 1354.2,397.7 1368.0,396.6 1381.8,397.7 1395.6,397.7 1409.4,396.6 1423.2,397.7 1437.0,397.7 1450.8,397.7 1464.6,396.6 1478.4,397.7 1492.2,397.7 1506.0,397.7 1519.8,396.6 1533.6,397.7 1547.4,397.7 1561.2,396.6 1575.0,397.7 1588.8,397.7 1602.6,397.7 1616.4,396.6 1630.2,397.7 1644.0,397.7 1657.8,396.6 1671.6,397.7 1685.4,397.7 1699.2,396.6 1713.0,397.7 1726.8,397.7 1740.6,396.6 1754.4,397.7 1768.2,397.7" fill="none" stroke="#f04848" stroke-opacity="0.85" stroke-width="2" stroke-linejoin="round"/>
  <polyline points="126.0,398.7 139.8,398.7 153.6,398.7 167.4,398.7 181.2,398.7 195.0,398.7 208.8,398.7 222.6,398.7 236.4,398.7 250.2,398.7 264.0,398.7 277.8,398.7 291.6,398.7 305.4,398.7 319.2,398.7 333.0,398.7 346.8,398.7 360.6,398.7 374.4,398.7 388.2,398.7 402.0,398.7 415.8,398.7 429.6,398.7 443.4,398.7 457.2,397.0 471.0,398.7 484.8,398.7 498.6,398.7 512.4,398.7 526.2,398.7 540.0,398.7 553.8,398.7 567.6,398.7 581.4,398.7 595.2,398.7 609.0,398.7 622.8,398.7 636.6,398.7 650.4,398.7 664.2,398.7 678.0,398.7 691.8,398.7 705.6,398.7 719.4,398.7 733.2,398.7 747.0,398.7 760.8,385.8 774.6,355.6 788.4,351.7 802.2,389.5 816.0,398.7 829.8,398.7 843.6,398.7 857.4,398.7 871.2,398.7 885.0,398.7 898.8,398.7 912.6,398.7 926.4,398.7 940.2,398.7 954.0,398.7 967.8,398.7 981.6,398.7 995.4,398.7 1009.2,398.7 1023.0,398.7 1036.8,398.7 1050.6,398.7 1064.4,398.7 1078.2,398.7 1092.0,398.7 1105.8,398.7 1119.6,398.7 1133.4,398.7 1147.2,398.7 1161.0,398.7 1174.8,398.7 1188.6,398.7 1202.4,398.7 1216.2,398.7 1230.0,398.7 1243.8,398.7 1257.6,398.7 1271.4,398.7 1285.2,398.7 1299.0,398.7 1312.8,398.7 1326.6,398.7 1340.4,398.7 1354.2,398.7 1368.0,398.7 1381.8,398.7 1395.6,398.7 1409.4,398.7 1423.2,398.7 1437.0,398.7 1450.8,398.7 1464.6,398.7 1478.4,398.7 1492.2,398.7 1506.0,398.7 1519.8,398.7 1533.6,398.7 1547.4,398.7 1561.2,398.7 1575.0,398.7 1588.8,398.7 1602.6,398.7 1616.4,398.7 1630.2,398.7 1644.0,398.7 1657.8,398.7 1671.6,398.7 1685.4,398.7 1699.2,398.7 1713.0,398.7 1726.8,398.7 1740.6,398.7 1754.4,398.7 1768.2,398.7" fill="none" stroke="#f04848" stroke-opacity="0.85" stroke-width="2" stroke-linejoin="round"/>
</g>
<circle cx="774.6" cy="318.4" r="2.8" fill="#f04b4b"/><circle cx="774.6" cy="355.6" r="2.8" fill="#f04b4b"/><circle cx="788.4" cy="327.3" r="2.8" fill="#f04b4b"/>
<circle cx="788.4" cy="351.7" r="2.8" fill="#ee7070"/><circle cx="802.2" cy="385.1" r="2.8" fill="#ee7070"/><circle cx="802.2" cy="389.5" r="2.8" fill="#ee7070"/>
<rect x="769.4" y="318.2" width="39.6" height="80.7" fill="none" stroke="#a3a3a3" stroke-width="1.2"/>
<circle cx="770" cy="307.1" r="5.4" fill="#f4433c"/>
<polygon points="746.9,405.2 752.6,416.6 741.2,416.6" fill="#4b93ff"/>
<polygon points="804.7,405.2 810.4,416.6 799,416.6" fill="#4b93ff"/>
<circle cx="802.8" cy="273.7" r="5.2" fill="#1677ff"/>
<text x="819" y="277" font-size="10.8" fill="#595959" font-weight="400" text-anchor="start" >Actuals To Reference Model</text>
<circle cx="974.7" cy="273.7" r="5.2" fill="#f5a623"/>
<text x="991" y="277" font-size="10.8" fill="#595959" font-weight="400" text-anchor="start" >Actuals To Baseline Model</text>

<!-- splitter -->
<line x1="772" y1="491" x2="805.5" y2="491" stroke="#8c8c8c" stroke-width="3.2" stroke-linecap="round"/>
<line x1="788.5" y1="491" x2="788.5" y2="563.5" stroke="#8c8c8c" stroke-width="1.4"/>
<!-- bottom card -->
<rect x="68.5" y="565.5" width="1771" height="349.5" rx="6" fill="#fff" stroke="#8f8f8f" stroke-width="1.3"/>
<circle cx="788.5" cy="563.5" r="4.4" fill="#8c8c8c"/>
<text x="90.7" y="600.8" font-size="12.6" fill="#262626" font-weight="400" text-anchor="start" >Distribution Comparison</text>
<text x="240.2" y="600.8" font-size="12.6" fill="#8c8c8c" xml:space="preserve">2025-07-13 09:20:00  -  2025-07-13 09:50:59</text>
<rect x="112" y="684.5" width="561.2" height="81" fill="#e6e6e6"/>
<line x1="673.2" y1="684.5" x2="1796" y2="684.5" stroke="#e0e6f1" stroke-width="1"/>
<line x1="112" y1="684.5" x2="673.2" y2="684.5" stroke="#d3d7e0" stroke-width="1"/>
<line x1="673.2" y1="700.6" x2="1796" y2="700.6" stroke="#e0e6f1" stroke-width="1"/>
<line x1="112" y1="700.6" x2="673.2" y2="700.6" stroke="#d3d7e0" stroke-width="1"/>
<line x1="673.2" y1="716.7" x2="1796" y2="716.7" stroke="#e0e6f1" stroke-width="1"/>
<line x1="112" y1="716.7" x2="673.2" y2="716.7" stroke="#d3d7e0" stroke-width="1"/>
<line x1="673.2" y1="733.1" x2="1796" y2="733.1" stroke="#e0e6f1" stroke-width="1"/>
<line x1="112" y1="733.1" x2="673.2" y2="733.1" stroke="#d3d7e0" stroke-width="1"/>
<line x1="673.2" y1="749.3" x2="1796" y2="749.3" stroke="#e0e6f1" stroke-width="1"/>
<line x1="112" y1="749.3" x2="673.2" y2="749.3" stroke="#d3d7e0" stroke-width="1"/>
<text x="104.3" y="687.3000000000001" font-size="10.6" fill="#8c8c8c" font-weight="400" text-anchor="end" >100</text>
<text x="104.3" y="703.5000000000001" font-size="10.6" fill="#8c8c8c" font-weight="400" text-anchor="end" >80</text>
<text x="104.3" y="719.7" font-size="10.6" fill="#8c8c8c" font-weight="400" text-anchor="end" >60</text>
<text x="104.3" y="735.9000000000001" font-size="10.6" fill="#8c8c8c" font-weight="400" text-anchor="end" >40</text>
<text x="104.3" y="752.1" font-size="10.6" fill="#8c8c8c" font-weight="400" text-anchor="end" >20</text>
<text x="104.3" y="768.3000000000001" font-size="10.6" fill="#8c8c8c" font-weight="400" text-anchor="end" >0</text>
<line x1="112" y1="765.5" x2="1796" y2="765.5" stroke="#6e7079" stroke-width="1.2"/>
<line x1="112.0" y1="765.5" x2="112.0" y2="770" stroke="#6e7079" stroke-width="1"/>
<line x1="299.1" y1="765.5" x2="299.1" y2="770" stroke="#6e7079" stroke-width="1"/>
<line x1="486.2" y1="765.5" x2="486.2" y2="770" stroke="#6e7079" stroke-width="1"/>
<line x1="673.3" y1="765.5" x2="673.3" y2="770" stroke="#6e7079" stroke-width="1"/>
<line x1="860.4" y1="765.5" x2="860.4" y2="770" stroke="#6e7079" stroke-width="1"/>
<line x1="1047.6" y1="765.5" x2="1047.6" y2="770" stroke="#6e7079" stroke-width="1"/>
<line x1="1234.7" y1="765.5" x2="1234.7" y2="770" stroke="#6e7079" stroke-width="1"/>
<line x1="1421.8" y1="765.5" x2="1421.8" y2="770" stroke="#6e7079" stroke-width="1"/>
<line x1="1608.9" y1="765.5" x2="1608.9" y2="770" stroke="#6e7079" stroke-width="1"/>
<line x1="1796.0" y1="765.5" x2="1796.0" y2="770" stroke="#6e7079" stroke-width="1"/>
<text x="205.6" y="780" font-size="10.8" fill="#8c8c8c" font-weight="400" text-anchor="middle" >0 - 9</text>
<rect x="166.6" y="685.7" width="22" height="79.3" fill="#1677ff"/>
<text x="173.3" y="668.9" font-size="11" fill="#464646" text-anchor="middle" dominant-baseline="central" transform="rotate(-45 173.3 668.9)">98.2</text>
<rect x="194.6" y="684.7" width="22" height="80.3" fill="#ffbb00"/>
<text x="201.3" y="667.9" font-size="11" fill="#464646" text-anchor="middle" dominant-baseline="central" transform="rotate(-45 201.3 667.9)">99.35</text>
<rect x="222.6" y="702.2" width="22" height="62.8" fill="#5cd9cf"/>
<text x="229.3" y="685.4" font-size="11" fill="#464646" text-anchor="middle" dominant-baseline="central" transform="rotate(-45 229.3 685.4)">77.8</text>
<text x="392.7" y="780" font-size="10.8" fill="#8c8c8c" font-weight="400" text-anchor="middle" >10 - 19</text>
<rect x="353.7" y="764.0" width="22" height="1.0" fill="#1677ff"/>
<text x="360.4" y="747.2" font-size="11" fill="#464646" text-anchor="middle" dominant-baseline="central" transform="rotate(-45 360.4 747.2)">0.49</text>
<rect x="381.7" y="764.0" width="22" height="1.0" fill="#ffbb00"/>
<text x="388.4" y="747.2" font-size="11" fill="#464646" text-anchor="middle" dominant-baseline="central" transform="rotate(-45 388.4 747.2)">0.5406</text>
<rect x="409.7" y="762.5" width="22" height="2.5" fill="#5cd9cf"/>
<text x="416.4" y="745.7" font-size="11" fill="#464646" text-anchor="middle" dominant-baseline="central" transform="rotate(-45 416.4 745.7)">3.3</text>
<text x="579.8" y="780" font-size="10.8" fill="#8c8c8c" font-weight="400" text-anchor="middle" >20 - 29</text>
<rect x="540.8" y="764.0" width="22" height="1.0" fill="#1677ff"/>
<text x="547.5" y="747.2" font-size="11" fill="#464646" text-anchor="middle" dominant-baseline="central" transform="rotate(-45 547.5 747.2)">0.21</text>
<rect x="568.8" y="764.0" width="22" height="1.0" fill="#ffbb00"/>
<text x="575.5" y="747.2" font-size="11" fill="#464646" text-anchor="middle" dominant-baseline="central" transform="rotate(-45 575.5 747.2)">0.0033</text>
<rect x="596.8" y="750.2" width="22" height="14.8" fill="#5cd9cf"/>
<text x="603.5" y="733.4" font-size="11" fill="#464646" text-anchor="middle" dominant-baseline="central" transform="rotate(-45 603.5 733.4)">18.58</text>
<text x="766.9" y="780" font-size="10.8" fill="#8c8c8c" font-weight="400" text-anchor="middle" >30 - 39</text>
<rect x="727.9" y="764.0" width="22" height="1.0" fill="#1677ff"/>
<text x="734.6" y="747.2" font-size="11" fill="#464646" text-anchor="middle" dominant-baseline="central" transform="rotate(-45 734.6 747.2)">0.33</text>
<rect x="755.9" y="764.0" width="22" height="1.0" fill="#ffbb00"/>
<text x="762.6" y="747.2" font-size="11" fill="#464646" text-anchor="middle" dominant-baseline="central" transform="rotate(-45 762.6 747.2)">0.0167</text>
<rect x="783.9" y="764.0" width="22" height="1.0" fill="#5cd9cf"/>
<text x="790.6" y="747.2" font-size="11" fill="#464646" text-anchor="middle" dominant-baseline="central" transform="rotate(-45 790.6 747.2)">0.0122</text>
<text x="954.0" y="780" font-size="10.8" fill="#8c8c8c" font-weight="400" text-anchor="middle" >40 - 49</text>
<rect x="915.0" y="764.0" width="22" height="1.0" fill="#1677ff"/>
<text x="921.7" y="747.2" font-size="11" fill="#464646" text-anchor="middle" dominant-baseline="central" transform="rotate(-45 921.7 747.2)">0.12</text>
<rect x="943.0" y="764.0" width="22" height="1.0" fill="#ffbb00"/>
<text x="949.7" y="747.2" font-size="11" fill="#464646" text-anchor="middle" dominant-baseline="central" transform="rotate(-45 949.7 747.2)">0.0335</text>
<text x="977.7" y="747.2" font-size="11" fill="#464646" text-anchor="middle" dominant-baseline="central" transform="rotate(-45 977.7 747.2)">0</text>
<text x="1141.1" y="780" font-size="10.8" fill="#8c8c8c" font-weight="400" text-anchor="middle" >50 - 59</text>
<rect x="1102.1" y="764.0" width="22" height="1.0" fill="#1677ff"/>
<text x="1108.8" y="747.2" font-size="11" fill="#464646" text-anchor="middle" dominant-baseline="central" transform="rotate(-45 1108.8 747.2)">0.25</text>
<rect x="1130.1" y="764.0" width="22" height="1.0" fill="#ffbb00"/>
<text x="1136.8" y="747.2" font-size="11" fill="#464646" text-anchor="middle" dominant-baseline="central" transform="rotate(-45 1136.8 747.2)">0.0375</text>
<rect x="1158.1" y="764.0" width="22" height="1.0" fill="#5cd9cf"/>
<text x="1164.8" y="747.2" font-size="11" fill="#464646" text-anchor="middle" dominant-baseline="central" transform="rotate(-45 1164.8 747.2)">0.3035</text>
<text x="1328.2" y="780" font-size="10.8" fill="#8c8c8c" font-weight="400" text-anchor="middle" >60 - 69</text>
<rect x="1289.2" y="764.0" width="22" height="1.0" fill="#1677ff"/>
<text x="1295.9" y="747.2" font-size="11" fill="#464646" text-anchor="middle" dominant-baseline="central" transform="rotate(-45 1295.9 747.2)">0.06</text>
<text x="1323.9" y="747.2" font-size="11" fill="#464646" text-anchor="middle" dominant-baseline="central" transform="rotate(-45 1323.9 747.2)">0</text>
<text x="1351.9" y="747.2" font-size="11" fill="#464646" text-anchor="middle" dominant-baseline="central" transform="rotate(-45 1351.9 747.2)">0</text>
<text x="1515.3" y="780" font-size="10.8" fill="#8c8c8c" font-weight="400" text-anchor="middle" >70 - 79</text>
<rect x="1476.3" y="764.0" width="22" height="1.0" fill="#1677ff"/>
<text x="1483.0" y="747.2" font-size="11" fill="#464646" text-anchor="middle" dominant-baseline="central" transform="rotate(-45 1483.0 747.2)">0.05</text>
<text x="1511.0" y="747.2" font-size="11" fill="#464646" text-anchor="middle" dominant-baseline="central" transform="rotate(-45 1511.0 747.2)">0</text>
<text x="1539.0" y="747.2" font-size="11" fill="#464646" text-anchor="middle" dominant-baseline="central" transform="rotate(-45 1539.0 747.2)">0</text>
<text x="1702.4" y="780" font-size="10.8" fill="#8c8c8c" font-weight="400" text-anchor="middle" >80 - 100</text>
<rect x="1663.4" y="764.0" width="22" height="1.0" fill="#1677ff"/>
<text x="1670.1" y="747.2" font-size="11" fill="#464646" text-anchor="middle" dominant-baseline="central" transform="rotate(-45 1670.1 747.2)">0.29</text>
<rect x="1691.4" y="764.0" width="22" height="1.0" fill="#ffbb00"/>
<text x="1698.1" y="747.2" font-size="11" fill="#464646" text-anchor="middle" dominant-baseline="central" transform="rotate(-45 1698.1 747.2)">0.0188</text>
<rect x="1719.4" y="764.0" width="22" height="1.0" fill="#5cd9cf"/>
<text x="1726.1" y="747.2" font-size="11" fill="#464646" text-anchor="middle" dominant-baseline="central" transform="rotate(-45 1726.1 747.2)">0.0002</text>
<text x="953.5" y="800" font-size="10.8" fill="#6e7079" font-weight="400" text-anchor="middle" >Buckets</text>
<rect x="792.4" y="634.4" width="22.4" height="12.2" rx="3" fill="#1677ff"/>
<text x="819.9" y="643.5" font-size="10.8" fill="#595959" font-weight="400" text-anchor="start" >Reference Model</text>
<rect x="911" y="634.4" width="22.4" height="12.2" rx="3" fill="#ffbb00"/>
<text x="938.5" y="643.5" font-size="10.8" fill="#595959" font-weight="400" text-anchor="start" >Baseline Model</text>
<rect x="1020.8" y="634.4" width="22.4" height="12.2" rx="3" fill="#5cd9cf"/>
<text x="1048.3" y="643.5" font-size="10.8" fill="#595959" font-weight="400" text-anchor="start" >Actuals Model</text>
<!-- dropdown -->
<defs><filter id="sh" x="-50%" y="-50%" width="200%" height="200%"><feDropShadow dx="0" dy="6" stdDeviation="10" flood-color="#000" flood-opacity="0.12"/></filter></defs>
<rect x="132" y="250.3" width="161.8" height="150.7" rx="7" fill="#fff" filter="url(#sh)"/>
<rect x="136" y="368" width="154.8" height="29" rx="4" fill="#e6f4ff"/>
<text x="147" y="271.2" font-size="12.6" fill="#262626" font-weight="400" text-anchor="start" >Amazon</text>
<text x="147" y="299.6" font-size="12.6" fill="#262626" font-weight="400" text-anchor="start" >Best Buy</text>
<text x="147" y="328.4" font-size="12.6" fill="#262626" font-weight="400" text-anchor="start" >Costco</text>
<text x="147" y="357.2" font-size="12.6" fill="#262626" font-weight="400" text-anchor="start" >Target</text>
<text x="147" y="386.2" font-size="12.6" fill="#262626" font-weight="700" text-anchor="start" >Walmart</text>
</svg>
</body></html>
